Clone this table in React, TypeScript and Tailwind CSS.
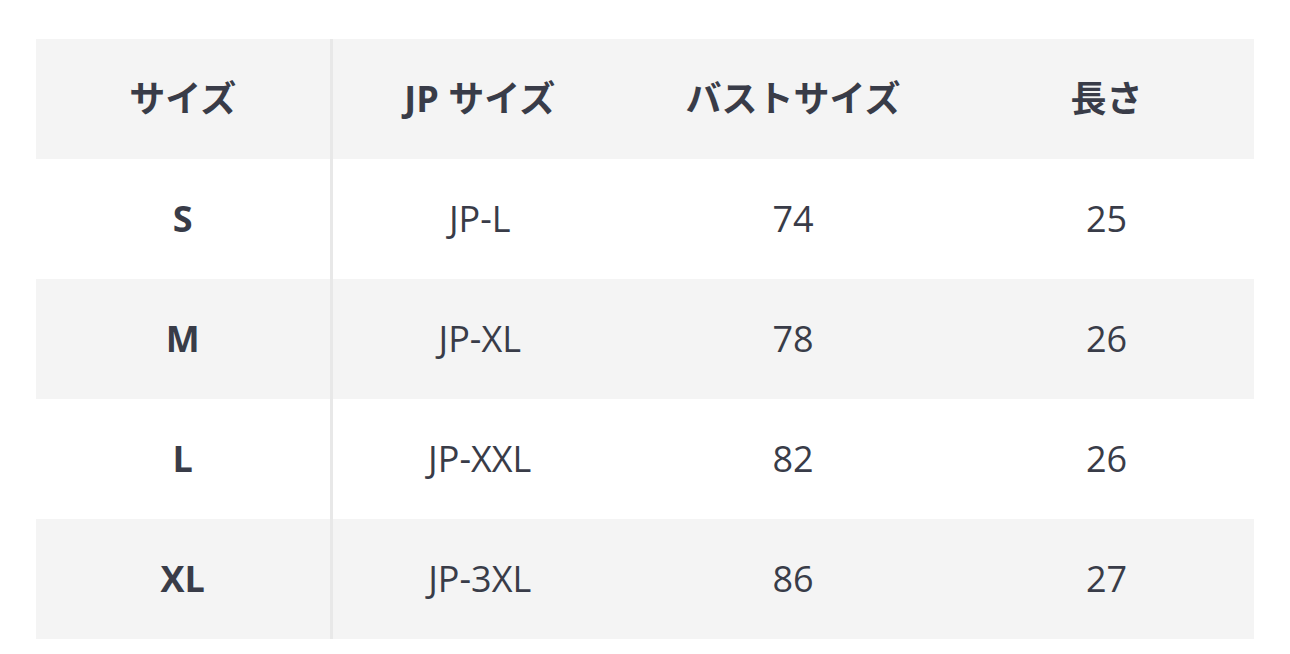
const rows = [
  { size: 'S', jp: 'JP-L', bust: '74', len: '25' },
  { size: 'M', jp: 'JP-XL', bust: '78', len: '26' },
  { size: 'L', jp: 'JP-XXL', bust: '82', len: '26' },
  { size: 'XL', jp: 'JP-3XL', bust: '86', len: '27' },
]

const font = { fontFamily: '"Open Sans", "Noto Sans CJK JP", sans-serif' }

export default function App() {
  return (
    <div className="min-h-[654px] bg-white px-[36px] pt-[39px]" style={font}>
      <table className="w-[1218px] table-fixed border-collapse text-[36px] text-[#393c48]">
        <colgroup>
          <col className="w-[295px]" />
          <col className="w-[296px]" />
          <col className="w-[332px]" />
          <col className="w-[295px]" />
        </colgroup>
        <thead>
          <tr className="h-[120px] bg-[#f4f4f4] font-bold">
            <th className="border-r-[3px] border-[#e8e8e8] text-center">サイズ</th>
            <th className="text-center">JP サイズ</th>
            <th className="text-center">バストサイズ</th>
            <th className="text-center">長さ</th>
          </tr>
        </thead>
        <tbody>
          {rows.map((r, i) => (
            <tr key={r.size} className={`h-[120px] ${i % 2 === 1 ? 'bg-[#f4f4f4]' : 'bg-white'}`}>
              <td className="border-r-[3px] border-[#e8e8e8] text-center font-bold">{r.size}</td>
              <td className="text-center">{r.jp}</td>
              <td className="text-center">{r.bust}</td>
              <td className="text-center">{r.len}</td>
            </tr>
          ))}
        </tbody>
      </table>
    </div>
  )
}
